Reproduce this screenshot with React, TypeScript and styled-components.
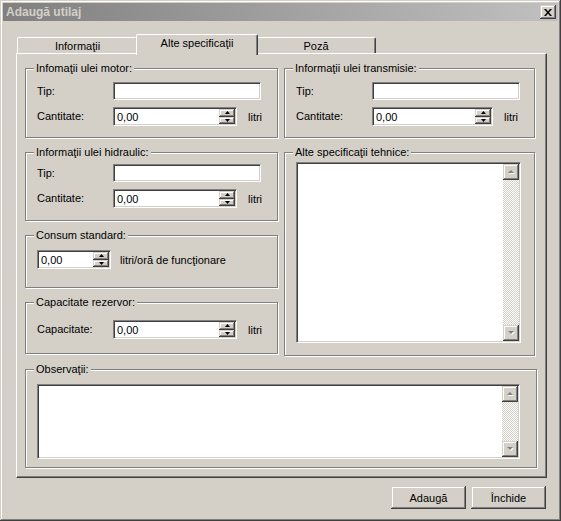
import styled, { createGlobalStyle, css } from "styled-components";

const face = "#d4d0c8";
const shadow = "#808080";
const dark = "#404040";

const GlobalStyle = createGlobalStyle`
  html, body {
    margin: 0;
    padding: 0;
    background: ${face};
  }
  body {
    font-family: "Liberation Sans", Arial, sans-serif;
    font-size: 11px;
    color: #000;
  }
`;

const raised = css`
  background: ${face};
  box-shadow: inset -1px -1px ${dark}, inset 1px 1px ${face}, inset -2px -2px ${shadow},
    inset 2px 2px #fff;
`;

const sunken = css`
  border-top: 1px solid ${shadow};
  border-left: 1px solid ${shadow};
  border-bottom: 1px solid #fff;
  border-right: 1px solid #fff;
  box-shadow: inset 1px 1px ${dark}, inset -1px -1px ${face};
`;

function ArrowIcon({ dir, disabled }: { dir: "up" | "down"; disabled?: boolean }) {
  if (disabled) {
    const pts = dir === "up" ? "4,1 7,4 1,4" : "1,1 7,1 4,4";
    const pts2 = dir === "up" ? "5,2 8,5 2,5" : "2,2 8,2 5,5";
    return (
      <svg width="9" height="6" viewBox="0 0 9 6">
        <polygon points={pts2} fill="#fff" />
        <polygon points={pts} fill={shadow} />
      </svg>
    );
  }
  return (
    <svg width="5" height="3" viewBox="0 0 5 3">
      <polygon points={dir === "up" ? "2.5,0 5,3 0,3" : "0,0 5,0 2.5,3"} fill="#000" />
    </svg>
  );
}

function SpinBox({ width = 124 }: { width?: number }) {
  return (
    <SpinWrap style={{ width }}>
      <SpinInput defaultValue="0,00" />
      <SpinButtons>
        <SpinButton>
          <ArrowIcon dir="up" />
        </SpinButton>
        <SpinButton>
          <ArrowIcon dir="down" />
        </SpinButton>
      </SpinButtons>
    </SpinWrap>
  );
}

function MemoBox({ width, height }: { width: number; height: number }) {
  return (
    <MemoWrap style={{ width, height }}>
      <Memo />
      <ScrollBar>
        <ScrollButton>
          <ArrowIcon dir="up" disabled />
        </ScrollButton>
        <ScrollTrack />
        <ScrollButton>
          <ArrowIcon dir="down" disabled />
        </ScrollButton>
      </ScrollBar>
    </MemoWrap>
  );
}

function OilFields({ spinWidth }: { spinWidth?: number }) {
  return (
    <FieldGrid>
      <Label>Tip:</Label>
      <TextInput />
      <Label>Cantitate:</Label>
      <InlineRow $gap={11}>
        <SpinBox width={spinWidth} />
        <span>litri</span>
      </InlineRow>
    </FieldGrid>
  );
}

export default function App() {
  return (
    <>
      <GlobalStyle />
      <Window>
        <TitleBar>
          <Caption>Adaugă utilaj</Caption>
          <CloseButton title="Închide">
            <svg width="8" height="7" viewBox="0 0 8 7">
              <path d="M0 0h2l2 2.5L6 0h2L5 3.5 8 7H6L4 4.5 2 7H0l3-3.5z" fill="#000" />
            </svg>
          </CloseButton>
        </TitleBar>
        <Body>
          <TabStrip>
            <Tab $w={121}>Informaţii</Tab>
            <Tab $w={118} $active>
              Alte specificaţii
            </Tab>
            <Tab $w={120}>Poză</Tab>
          </TabStrip>
          <Panel>
            <Columns>
              <Column>
                <GroupBox $h={70} $pad="13px 0 0 11px">
                  <Legend>Infomaţii ulei motor:</Legend>
                  <OilFields />
                </GroupBox>
                <GroupBox $h={69} $pad="11px 0 0 11px">
                  <Legend>Informaţii ulei hidraulic:</Legend>
                  <OilFields />
                </GroupBox>
                <GroupBox $h={53} $pad="14px 0 0 11px">
                  <Legend>Consum standard:</Legend>
                  <InlineRow $gap={9}>
                    <SpinBox width={74} />
                    <span>litri/oră de funcţionare</span>
                  </InlineRow>
                </GroupBox>
                <GroupBox $h={52} $pad="17px 0 0 11px">
                  <Legend>Capacitate rezervor:</Legend>
                  <FieldGrid>
                    <Label>Capacitate:</Label>
                    <InlineRow $gap={11}>
                      <SpinBox />
                      <span>litri</span>
                    </InlineRow>
                  </FieldGrid>
                </GroupBox>
              </Column>
              <Column>
                <GroupBox $h={70} $pad="13px 0 0 11px">
                  <Legend>Informaţii ulei transmisie:</Legend>
                  <OilFields spinWidth={121} />
                </GroupBox>
                <GroupBox $h={204} $pad="9px 0 0 11px">
                  <Legend>Alte specificaţii tehnice:</Legend>
                  <MemoBox width={225} height={181} />
                </GroupBox>
              </Column>
            </Columns>
            <GroupBox $h={99} $pad="14px 0 0 11px">
              <Legend>Observaţii:</Legend>
              <MemoBox width={483} height={75} />
            </GroupBox>
          </Panel>
          <Footer>
            <PushButton>Adaugă</PushButton>
            <PushButton>Închide</PushButton>
          </Footer>
        </Body>
      </Window>
    </>
  );
}

const Window = styled.div`
  box-sizing: border-box;
  width: 561px;
  height: 521px;
  padding: 3px;
  display: flex;
  flex-direction: column;
  background: ${face};
  box-shadow: inset -1px -1px ${dark}, inset 1px 1px ${face}, inset -2px -2px ${shadow},
    inset 2px 2px #fff;
`;

const TitleBar = styled.div`
  height: 18px;
  display: flex;
  align-items: center;
  justify-content: space-between;
  padding: 0 2px 0 3px;
  background: linear-gradient(to right, #808080, #c0c0c0);
`;

const Caption = styled.span`
  font-size: 12px;
  font-weight: bold;
  color: ${face};
`;

const CloseButton = styled.div`
  ${raised};
  width: 16px;
  height: 14px;
  display: flex;
  align-items: center;
  justify-content: center;
`;

const Body = styled.div`
  flex: 1;
  display: flex;
  flex-direction: column;
  padding: 13px 11px 9px 13px;
`;

const TabStrip = styled.div`
  height: 19px;
  display: flex;
  align-items: flex-end;
  padding-left: 1px;
`;

const Tab = styled.div<{ $active?: boolean; $w: number }>`
  box-sizing: border-box;
  position: relative;
  z-index: ${(p) => (p.$active ? 2 : 1)};
  width: ${(p) => p.$w + (p.$active ? 4 : 0)}px;
  height: ${(p) => (p.$active ? 21 : 16)}px;
  margin: 0 ${(p) => (p.$active ? -2 : 0)}px ${(p) => (p.$active ? -2 : 0)}px;
  align-self: ${(p) => (p.$active ? "flex-start" : "flex-end")};
  padding-top: 2px;
  line-height: 13px;
  text-align: center;
  background: ${face};
  border-top: 1px solid #fff;
  border-left: 1px solid #fff;
  border-right: 1px solid ${dark};
  border-radius: 2px 2px 0 0;
  box-shadow: inset -1px 0 ${shadow};
`;

const Panel = styled.div`
  box-sizing: border-box;
  height: 425px;
  padding: 14px 9px 0 8px;
  border-top: 1px solid #fff;
  border-left: 1px solid #fff;
  border-right: 1px solid ${dark};
  border-bottom: 1px solid ${dark};
  box-shadow: inset -1px -1px ${shadow};
  display: flex;
  flex-direction: column;
  gap: 13px;
`;

const Columns = styled.div`
  display: grid;
  grid-template-columns: 253px 251px;
  column-gap: 6px;
`;

const Column = styled.div`
  display: flex;
  flex-direction: column;
  gap: 14px;
`;

const GroupBox = styled.div<{ $h: number; $pad: string }>`
  box-sizing: border-box;
  position: relative;
  height: ${(p) => p.$h}px;
  padding: ${(p) => p.$pad};
  border: 1px solid ${shadow};
  box-shadow: inset 1px 1px #fff, 1px 1px #fff;
`;

const Legend = styled.span`
  position: absolute;
  top: -7px;
  left: 8px;
  padding: 0 2px;
  line-height: 13px;
  background: ${face};
`;

const FieldGrid = styled.div`
  display: grid;
  grid-template-columns: 76px auto;
  justify-content: start;
  row-gap: 7px;
  align-items: center;
`;

const Label = styled.span`
  line-height: 13px;
`;

const InlineRow = styled.div<{ $gap: number }>`
  display: flex;
  align-items: center;
  gap: ${(p) => p.$gap}px;
`;

const TextInput = styled.input`
  ${sunken};
  box-sizing: border-box;
  width: 148px;
  height: 18px;
  margin: 0;
  padding: 0 3px;
  background: #fff;
  font: inherit;
  outline: none;
`;

const SpinWrap = styled.div`
  ${sunken};
  box-sizing: border-box;
  height: 19px;
  display: flex;
  padding: 1px;
  background: #fff;
`;

const SpinInput = styled.input`
  flex: 1;
  min-width: 0;
  border: none;
  margin: 0;
  padding: 0 0 0 2px;
  background: transparent;
  font: inherit;
  color: #000;
  outline: none;
`;

const SpinButtons = styled.div`
  width: 16px;
  display: flex;
  flex-direction: column;
`;

const SpinButton = styled.div`
  ${raised};
  flex: 1;
  display: flex;
  align-items: center;
  justify-content: center;
`;

const MemoWrap = styled.div`
  ${sunken};
  box-sizing: border-box;
  display: flex;
  padding: 1px;
  background: #fff;
`;

const Memo = styled.textarea`
  flex: 1;
  border: none;
  margin: 0;
  padding: 1px 2px;
  resize: none;
  overflow: hidden;
  font: inherit;
  background: #fff;
  outline: none;
`;

const ScrollBar = styled.div`
  width: 16px;
  display: flex;
  flex-direction: column;
  background: repeating-conic-gradient(#fff 0 25%, ${face} 0 50%) 0 0 / 2px 2px;
`;

const ScrollButton = styled.div`
  ${raised};
  height: 16px;
  display: flex;
  align-items: center;
  justify-content: center;
`;

const ScrollTrack = styled.div`
  flex: 1;
`;

const Footer = styled.div`
  display: flex;
  justify-content: flex-end;
  gap: 5px;
  margin-top: 8px;
  padding-right: 1px;
`;

const PushButton = styled.button`
  ${raised};
  width: 75px;
  height: 23px;
  border: none;
  padding: 0;
  font: inherit;
  color: #000;
`;
